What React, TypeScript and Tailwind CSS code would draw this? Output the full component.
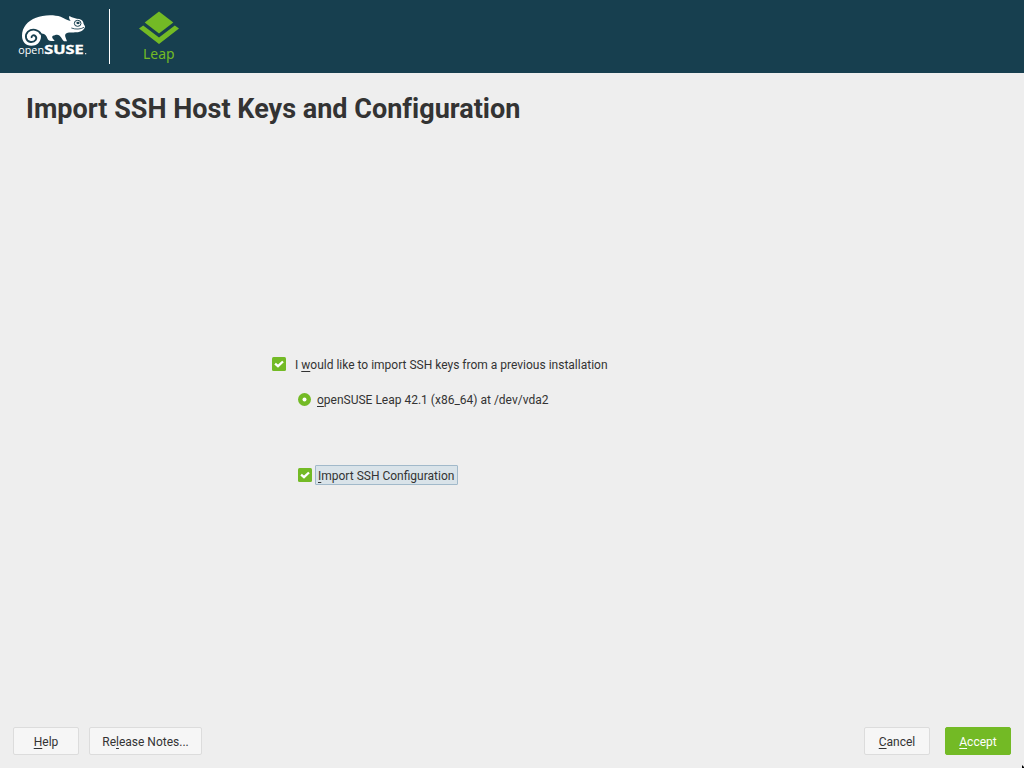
import type { ReactNode } from "react";

function Key({ children }: { children: ReactNode }) {
  return (
    <span className="underline decoration-1 underline-offset-2 [text-decoration-skip-ink:none]">
      {children}
    </span>
  );
}

function CheckMark() {
  return (
    <svg className="size-3.5 shrink-0" viewBox="0 0 14 14">
      <rect width="14" height="14" rx="1.5" fill="#73ba25" />
      <path d="M3.1 6.6 6 9.2 11 4.5" fill="none" stroke="#fff" strokeWidth="2.3" />
    </svg>
  );
}

function Chameleon() {
  return (
    <svg className="block h-[66px] w-[90px]" viewBox="0 0 270 198">
      <path
        fill="#fff"
        d="M36 95C36 70 53 50 78 41C98 32 132 31 152 38C163 42 171 49 182 51C178 46 176 41 178 36C188 42 198 44 208 45C216 47 220 53 221 60L225 67C225 77 213 85 199 85C188 86 178 84 171 87C165 90 164 94 167 101L171 112L162 112C157 108 155 101 149 95C142 89 134 94 129 95C124 98 127 103 133 109L133 111L123 111C113 109 113 104 110 98C106 92 100 88 92 89L93 98C92 115 80 125 64 125C47 125 36 113 36 95Z"
      />
      <path
        d="M93 91C86 76 66 73 54 83C43 94 47 112 62 114C76 115 83 103 76 96C71 91 63 95 65 102"
        fill="none"
        stroke="#173f4f"
        strokeWidth="5.5"
      />
      <ellipse cx="203" cy="58" rx="10" ry="9" fill="#fff" stroke="#173f4f" strokeWidth="3" />
      <ellipse cx="204" cy="57" rx="5" ry="3.5" fill="#173f4f" />
      <path d="M184 72C197 77 212 76 222 70" fill="none" stroke="#173f4f" strokeWidth="2.5" />
      <text x="25" y="151" fill="#fff" fontFamily="Open Sans, sans-serif" fontSize="34" textLength="77" lengthAdjust="spacingAndGlyphs">open</text>
      <text x="103" y="151" fill="#fff" stroke="#fff" strokeWidth="1" fontFamily="Open Sans, sans-serif" fontWeight="700" fontSize="35" textLength="118" lengthAdjust="spacingAndGlyphs">SUSE</text>
      <circle cx="227" cy="149" r="2" fill="#fff" />
    </svg>
  );
}

function LeapLogo() {
  return (
    <svg className="block h-[73px] w-[50px]" viewBox="0 0 50 73">
      <path d="M25 11.5 39.3 22.5 25 33.5 10.7 22.5Z" fill="#73ba25" />
      <path d="M9.2 25.5 25 37.5 40.8 25.5 45 28.4 25 44 5 28.4Z" fill="#73ba25" />
      <text x="9" y="59.3" fill="#73ba25" fontFamily="Noto Sans, sans-serif" fontSize="15" textLength="31.5" lengthAdjust="spacingAndGlyphs">Leap</text>
    </svg>
  );
}

const button =
  "flex h-7 items-center justify-center rounded-[2px] border pt-0.5";

export default function App() {
  return (
    <div className="flex h-screen w-screen flex-col overflow-hidden bg-[#eeeeee] font-['Roboto',sans-serif] text-[12px] leading-4 text-[#333333]">
      <header className="flex h-[73px] shrink-0 bg-[#173f4f] pl-2.5">
        <div className="pt-1">
          <Chameleon />
        </div>
        <div className="mt-[9px] ml-[9px] h-[55px] w-px bg-white" />
        <div className="ml-6">
          <LeapLogo />
        </div>
      </header>
      <h1 className="mt-[18px] ml-[26px] text-[27px] leading-9 font-bold tracking-[0.01px]">
        Import SSH Host Keys and Configuration
      </h1>
      <main className="flex grow flex-col items-start pt-[229px] pl-[272px]">
        <label className="flex h-4 items-center gap-[9px]">
          <CheckMark />
          <span className="pt-0.5">I <Key>w</Key>ould like to import SSH keys from a previous installation</span>
        </label>
        <label className="mt-[19px] ml-[26px] flex h-4 items-center gap-[6px]">
          <svg className="size-[13px]" viewBox="0 0 13 13">
            <circle cx="6.5" cy="6.5" r="6.5" fill="#73ba25" />
            <circle cx="6.5" cy="6.5" r="2" fill="#fff" />
          </svg>
          <span className="pt-px"><Key>o</Key>penSUSE Leap 42.1 (x86_64) at /dev/vda2</span>
        </label>
        <label className="mt-[58px] ml-[26px] flex h-5 items-center gap-[3px]">
          <CheckMark />
          <span className="h-5 w-[143px] rounded-[1px] border border-[#a1b9ca] bg-[#d9e3e9] pt-0.5 pl-0.5 whitespace-nowrap">
            <Key>I</Key>mport SSH Configuration
          </span>
        </label>
      </main>
      <footer className="flex h-[41px] shrink-0 items-start pr-[13px] pl-[13px]">
        <button className={`${button} w-[66px] border-[#dcdcdc] bg-[#f6f6f6]`}>
          <span><Key>H</Key>elp</span>
        </button>
        <button className={`${button} ml-2.5 w-[113px] border-[#dcdcdc] bg-[#f6f6f6]`}>
          <span>Re<Key>l</Key>ease Notes...</span>
        </button>
        <button className={`${button} ml-auto w-[66px] border-[#dcdcdc] bg-[#f6f6f6]`}>
          <span><Key>C</Key>ancel</span>
        </button>
        <button className={`${button} ml-[15px] w-[66px] border-[#73ba25] bg-[#73ba25] text-white`}>
          <span><Key>A</Key>ccept</span>
        </button>
      </footer>
      <svg className="absolute right-0 bottom-0 h-[3px] w-0.5" viewBox="0 0 2 3">
        <path d="M0 0 2 2V3H0Z" fill="#000" />
      </svg>
    </div>
  );
}
